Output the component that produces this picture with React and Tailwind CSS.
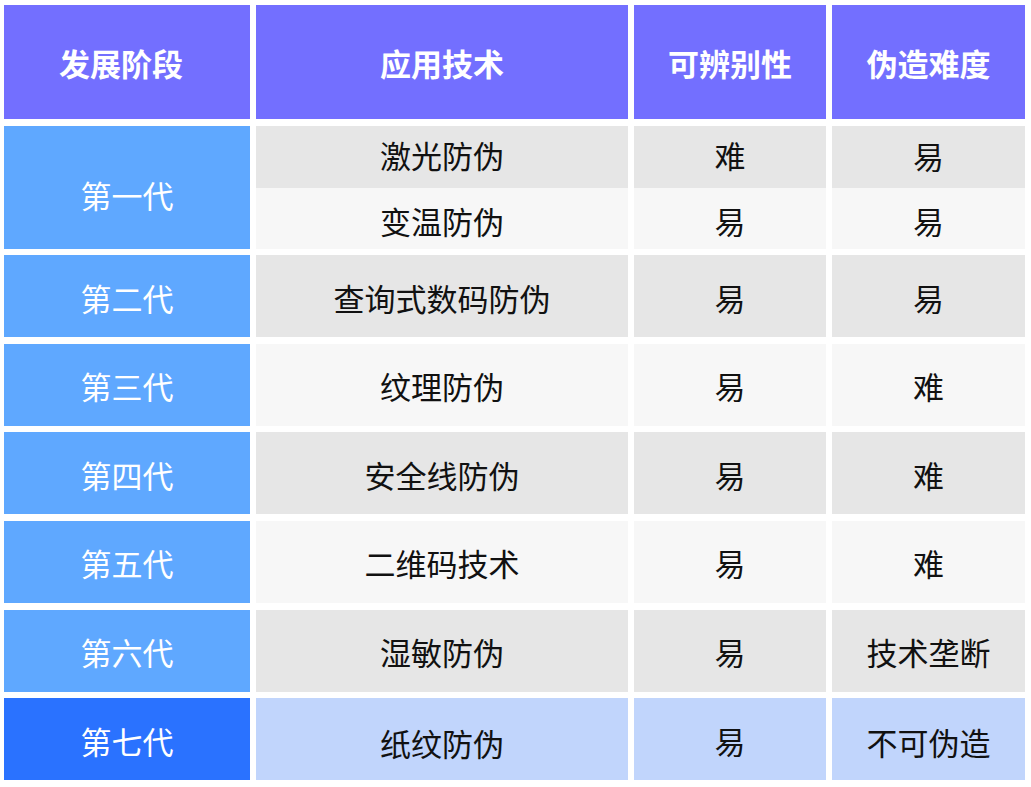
import React from "react";

const cols = "grid grid-cols-[246px_372px_192px_193px] gap-x-[6px]";
const font = { fontFamily: '"Noto Sans CJK SC", "Noto Sans", sans-serif' };

function Cell({ className = "", pad = "pt-[2px]", children }) {
  return (
    <div className={`flex items-center justify-center text-[31px] leading-none ${className}`}>
      <span className={pad}>{children}</span>
    </div>
  );
}

const rows = [
  { gen: "第二代", tech: "查询式数码防伪", a: "易", b: "易", bg: "bg-[#e6e6e6]" },
  { gen: "第三代", tech: "纹理防伪", a: "易", b: "难", bg: "bg-[#f7f7f7]" },
  { gen: "第四代", tech: "安全线防伪", a: "易", b: "难", bg: "bg-[#e6e6e6]" },
  { gen: "第五代", tech: "二维码技术", a: "易", b: "难", bg: "bg-[#f7f7f7]" },
  { gen: "第六代", tech: "湿敏防伪", a: "易", b: "技术垄断", bg: "bg-[#e6e6e6]" },
];

const headers = [
  { t: "发展阶段", cls: "pr-[12px]" },
  { t: "应用技术", cls: "" },
  { t: "可辨别性", cls: "" },
  { t: "伪造难度", cls: "" },
];

export default function App() {
  return (
    <div className="w-[1031px] h-[787px] bg-white pl-[4px] pt-[5px]" style={font}>
      <div className="flex flex-col gap-y-[6.6px]">
        <div className={`${cols} h-[114px]`}>
          {headers.map((h) => (
            <div key={h.t} className={`flex items-center justify-center bg-[#736fff] text-white text-[31px] font-bold leading-none ${h.cls}`}>
              <span className="pt-[1px]">{h.t}</span>
            </div>
          ))}
        </div>
        <div className={`${cols} grid-rows-[62px_61px]`}>
          <Cell className="row-span-2 bg-[#5fa8ff] text-white" pad="pt-[14px]">第一代</Cell>
          <Cell className="bg-[#e6e6e6] text-[#111]" pad="pb-[4px]">激光防伪</Cell>
          <Cell className="bg-[#e6e6e6] text-[#111]" pad="pb-[4px]">难</Cell>
          <Cell className="bg-[#e6e6e6] text-[#111]" pad="pb-[2px]">易</Cell>
          <Cell className="bg-[#f7f7f7] text-[#111]" pad="pt-[4px]">变温防伪</Cell>
          <Cell className="bg-[#f7f7f7] text-[#111]" pad="pt-[4px]">易</Cell>
          <Cell className="bg-[#f7f7f7] text-[#111]" pad="pt-[4px]">易</Cell>
        </div>
        {rows.map((r) => (
          <div key={r.gen} className={`${cols} h-[82px]`}>
            <Cell className="bg-[#5fa8ff] text-white">{r.gen}</Cell>
            <Cell className={`${r.bg} text-[#111]`}>{r.tech}</Cell>
            <Cell className={`${r.bg} text-[#111]`}>{r.a}</Cell>
            <Cell className={`${r.bg} text-[#111]`}>{r.b}</Cell>
          </div>
        ))}
        <div className={`${cols} h-[82px]`}>
          <Cell className="bg-[#2a72ff] text-white">第七代</Cell>
          <Cell className="bg-[#c1d5fc] text-[#111]" pad="pt-[6px]">纸纹防伪</Cell>
          <Cell className="bg-[#c1d5fc] text-[#111]">易</Cell>
          <Cell className="bg-[#c1d5fc] text-[#111]" pad="pt-[4px]">不可伪造</Cell>
        </div>
      </div>
    </div>
  );
}
